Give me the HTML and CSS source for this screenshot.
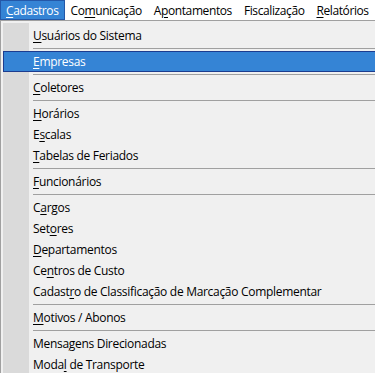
FILE: index.html
```html
<!DOCTYPE html>
<html lang="pt-BR">
<head>
<meta charset="utf-8">
<title>Menu Cadastros</title>
<link rel="stylesheet" href="styles.css">
</head>
<body>
<div class="menubar">
  <span class="mb-item active"><u>C</u>adastros</span>
  <span class="mb-item">Co<u>m</u>unicação</span>
  <span class="mb-item">A<u>p</u>ontamentos</span>
  <span class="mb-item">Fiscalização</span>
  <span class="mb-item"><u>R</u>elatórios</span>
</div>
<div class="menu">
  <div class="list">
    <div class="item"><u>U</u>suários do Sistema</div>
    <div class="sep"></div>
    <div class="item hl"><u>E</u>mpresas</div>
    <div class="sep"></div>
    <div class="item"><u>C</u>oletores</div>
    <div class="sep"></div>
    <div class="item"><u>H</u>orários</div>
    <div class="item">E<u>s</u>calas</div>
    <div class="item"><u>T</u>abelas de Feriados</div>
    <div class="sep"></div>
    <div class="item"><u>F</u>uncionários</div>
    <div class="sep"></div>
    <div class="item">C<u>a</u>rgos</div>
    <div class="item">Set<u>o</u>res</div>
    <div class="item"><u>D</u>epartamentos</div>
    <div class="item">Ce<u>n</u>tros de Custo</div>
    <div class="item">Cadast<u>r</u>o de Classificação de Marcação Complementar</div>
    <div class="sep"></div>
    <div class="item"><u>M</u>otivos / Abonos</div>
    <div class="sep"></div>
    <div class="item">Mensa<u>g</u>ens Direcionadas</div>
    <div class="item">Moda<u>l</u> de Transporte</div>
  </div>
</div>
</body>
</html>
```
FILE: styles.css
```css
html, body {
  margin: 0;
  padding: 0;
  width: 375px;
  height: 373px;
  overflow: hidden;
  background: #f0f0f0;
}
body {
  font-family: "Open Sans", "Noto Sans", sans-serif;
  font-size: 12px;
  letter-spacing: -0.3px;
  color: #000;
}
u {
  text-decoration: underline;
  text-decoration-thickness: 1px;
  text-underline-offset: 2px;
}
.menubar {
  display: flex;
  height: 20px;
  background: #ffffff;
  white-space: nowrap;
  letter-spacing: -0.4px;
}
.mb-item {
  padding: 1px 6px 0;
  line-height: 19px;
}
.mb-item.active {
  background: #3584d5;
  color: #fff;
  box-shadow: inset 0 0 0 1px #2458a8;
}
.menu {
  border-top: 1px solid #a0a0a0;
  border-left: 1px solid #a0a0a0;
  padding: 2px 0 0 2px;
  background: #f0f0f0;
}
.list {
  padding-top: 2px;
  background: linear-gradient(to right, #dadada 0 26px, #f0f0f0 26px);
}
.item {
  height: 21px;
  line-height: 20px;
  padding: 1px 0 0 30px;
  white-space: nowrap;
  box-sizing: border-box;
}
.item.hl {
  background: #3584d5;
  color: #fff;
  border: 1px solid #1c3c8f;
  border-right: none;
  padding: 0 0 0 29px;
  line-height: 19px;
}
.sep {
  height: 5px;
  margin-left: 30px;
  background: linear-gradient(to bottom, transparent 2px, #a0a0a0 2px 3px, transparent 3px);
}
```
